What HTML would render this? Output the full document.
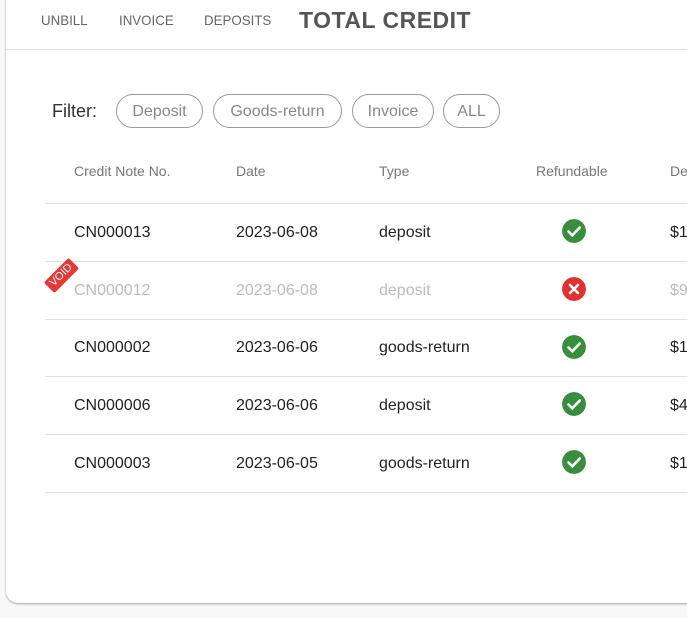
<!DOCTYPE html>
<html><head><style>
body{margin:0;background:#f8f8f8;font-family:"Liberation Sans",sans-serif;width:687px;height:618px;overflow:hidden;position:relative}
.card{position:absolute;left:6px;top:-10px;width:700px;height:613px;background:#fff;border-radius:0 0 0 12px;box-shadow:0 1px 2px rgba(0,0,0,.35)}
.abs{position:absolute;white-space:nowrap}
.tab{top:12px;font-size:14px;color:#666;transform:scaleX(.95);transform-origin:left}
.hline{position:absolute;left:6px;right:0;height:1px;background:#e0e0e0}
.pill{position:absolute;top:94px;height:34px;border:1px solid #999;border-radius:18px;box-sizing:border-box;color:#888;font-size:16px;line-height:33px;text-align:center}
.th{top:163px;font-size:14px;color:#777}
.td{font-size:16px;color:#222}
.rl{position:absolute;left:45px;right:0;height:1px;background:#e2e2e2}
.ic{position:absolute;left:562px;width:24px;height:24px;border-radius:50%}
</style></head><body>
<div class="card"></div>
<div class="abs tab" style="left:41px">UNBILL</div>
<div class="abs tab" style="left:119px">INVOICE</div>
<div class="abs tab" style="left:204px">DEPOSITS</div>
<div class="abs" style="left:299px;top:7px;font-size:23px;font-weight:bold;color:#555;letter-spacing:.5px">TOTAL CREDIT</div>
<div class="hline" style="top:49px"></div>
<div class="abs" style="left:52px;top:101px;font-size:18px;color:#333">Filter:</div>
<div class="pill" style="left:116px;width:87px">Deposit</div>
<div class="pill" style="left:213px;width:129px">Goods-return</div>
<div class="pill" style="left:352px;width:82px">Invoice</div>
<div class="pill" style="left:443px;width:57px">ALL</div>
<div class="abs th" style="left:74px">Credit Note No.</div>
<div class="abs th" style="left:236px">Date</div>
<div class="abs th" style="left:379px">Type</div>
<div class="abs th" style="left:536px">Refundable</div>
<div class="abs th" style="left:670px">De</div>
<div class="rl" style="top:203px"></div>
<div class="rl" style="top:261px"></div>
<div class="rl" style="top:319px"></div>
<div class="rl" style="top:376px"></div>
<div class="rl" style="top:434px"></div>
<div class="rl" style="top:492px"></div>

<div class="abs td" style="left:74px;top:224px">CN000013</div><div class="abs td" style="left:236px;top:224px">2023-06-08</div><div class="abs td" style="left:379px;top:224px">deposit</div><div class="abs td" style="left:670px;top:224px">$1</div>
<div class="abs td" style="left:74px;top:282px;color:#bbb">CN000012</div><div class="abs td" style="left:236px;top:282px;color:#bbb">2023-06-08</div><div class="abs td" style="left:379px;top:282px;color:#bbb">deposit</div><div class="abs td" style="left:670px;top:282px;color:#bbb">$9</div>
<div class="abs td" style="left:74px;top:339px">CN000002</div><div class="abs td" style="left:236px;top:339px">2023-06-06</div><div class="abs td" style="left:379px;top:339px">goods-return</div><div class="abs td" style="left:670px;top:339px">$1</div>
<div class="abs td" style="left:74px;top:397px">CN000006</div><div class="abs td" style="left:236px;top:397px">2023-06-06</div><div class="abs td" style="left:379px;top:397px">deposit</div><div class="abs td" style="left:670px;top:397px">$4</div>
<div class="abs td" style="left:74px;top:455px">CN000003</div><div class="abs td" style="left:236px;top:455px">2023-06-05</div><div class="abs td" style="left:379px;top:455px">goods-return</div><div class="abs td" style="left:670px;top:455px">$1</div>

<div class="abs" style="left:44px;top:268px;background:#e53935;color:#fff;font-size:11px;line-height:13px;padding:1px 4px;border-radius:2px;transform:rotate(-45deg);transform-origin:center">VOID</div>

<svg class="ic" style="top:219px" viewBox="0 0 24 24"><circle cx="12" cy="12" r="12" fill="#388e3c"/><path d="M6.5 12.5l3.8 3.8 7.5-7.8" stroke="#fff" stroke-width="2.6" fill="none" stroke-linecap="round"/></svg>
<svg class="ic" style="top:277px" viewBox="0 0 24 24"><circle cx="12" cy="12" r="12" fill="#e03030"/><path d="M8 8l8 8M16 8l-8 8" stroke="#fff" stroke-width="2.6" stroke-linecap="round"/></svg>
<svg class="ic" style="top:335px" viewBox="0 0 24 24"><circle cx="12" cy="12" r="12" fill="#388e3c"/><path d="M6.5 12.5l3.8 3.8 7.5-7.8" stroke="#fff" stroke-width="2.6" fill="none" stroke-linecap="round"/></svg>
<svg class="ic" style="top:392px" viewBox="0 0 24 24"><circle cx="12" cy="12" r="12" fill="#388e3c"/><path d="M6.5 12.5l3.8 3.8 7.5-7.8" stroke="#fff" stroke-width="2.6" fill="none" stroke-linecap="round"/></svg>
<svg class="ic" style="top:450px" viewBox="0 0 24 24"><circle cx="12" cy="12" r="12" fill="#388e3c"/><path d="M6.5 12.5l3.8 3.8 7.5-7.8" stroke="#fff" stroke-width="2.6" fill="none" stroke-linecap="round"/></svg>
</body></html>
